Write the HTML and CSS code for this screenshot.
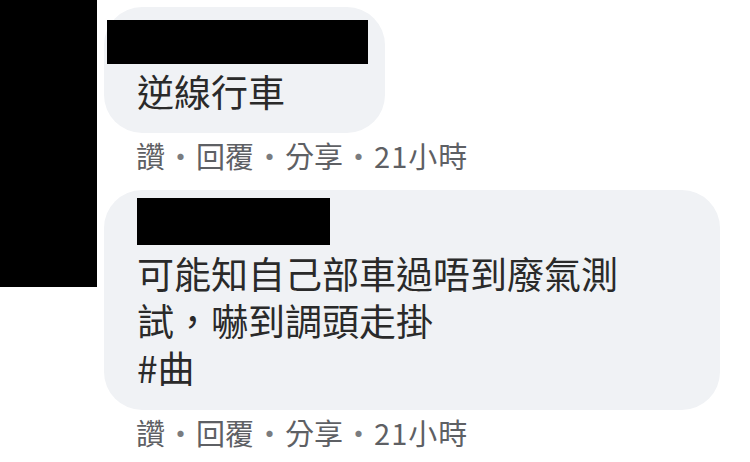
FILE: index.html
```html
<!DOCTYPE html>
<html lang="zh-Hant">
  <head>
    <meta charset="UTF-8" />
    <meta name="viewport" content="width=device-width, initial-scale=1.0" />
    <title>留言</title>
    <link rel="stylesheet" href="styles.css">
  </head>
  <body>
    <div class="thread">
      <!-- avatar column (hidden) -->
      <div class="avatar-col">
        <div class="avatar-mask"></div>
      </div>

      <div class="comments">
        <div class="comment">
          <div class="bubble bubble-short">
            <div class="name-mask name-mask-wide"></div>
            <div class="comment-text">逆線行車</div>
          </div>
          <div class="meta meta-first">
            <span>讚</span><span class="dot">·</span><span>回覆</span><span class="dot">·</span><span>分享</span><span class="dot">·</span><span class="time">21小時</span>
          </div>
        </div>

        <div class="comment">
          <div class="bubble bubble-long">
            <div class="name-mask name-mask-short"></div>
            <div class="comment-text">可能知自己部車過唔到廢氣測試，嚇到調頭走掛<br />#曲</div>
          </div>
          <div class="meta">
            <span>讚</span><span class="dot">·</span><span>回覆</span><span class="dot">·</span><span>分享</span><span class="dot">·</span><span class="time">21小時</span>
          </div>
        </div>
      </div>
    </div>
  </body>
</html>
```

FILE: styles.css
```css
/* General styles */
body {
  margin: 0;
  padding: 0;
  background-color: #fff;
  font-family: "Noto Sans CJK TC", "Noto Sans", sans-serif;
  color: #1c1e21;
}

.thread {
  display: flex;
  align-items: flex-start;
}

.avatar-col {
  width: 97px;
  flex-shrink: 0;
}

.avatar-mask {
  height: 287px;
  background-color: #000;
}

.comments {
  padding-left: 7px;
  padding-top: 7px;
}

/* Comment bubble */
.bubble {
  background-color: #f0f2f5;
  border-radius: 38px;
  box-sizing: border-box;
}

.bubble-short {
  width: fit-content;
  padding: 13px 17px 18px 33px;
}

.bubble-long {
  width: 616px;
  padding: 8px 83px 19px 33px;
}

.name-mask {
  background-color: #000;
}

.name-mask-wide {
  width: 261px;
  height: 44px;
  margin-left: -30px;
  margin-bottom: 4px;
}

.name-mask-short {
  width: 193px;
  height: 47px;
  margin-bottom: 5px;
}

.comment-text {
  font-size: 37px;
  line-height: 47px;
  color: #2a2a2a;
}

/* Actions under the bubble */
.meta {
  padding-left: 32px;
  margin-top: 5px;
  font-size: 29px;
  line-height: 34px;
  color: #5e6064;
  white-space: nowrap;
}

.meta-first {
  margin-bottom: 18px;
}

.meta .dot {
  margin: 0 1px;
  color: #7a7c80;
}

.meta .time {
  letter-spacing: 1px;
}
```
